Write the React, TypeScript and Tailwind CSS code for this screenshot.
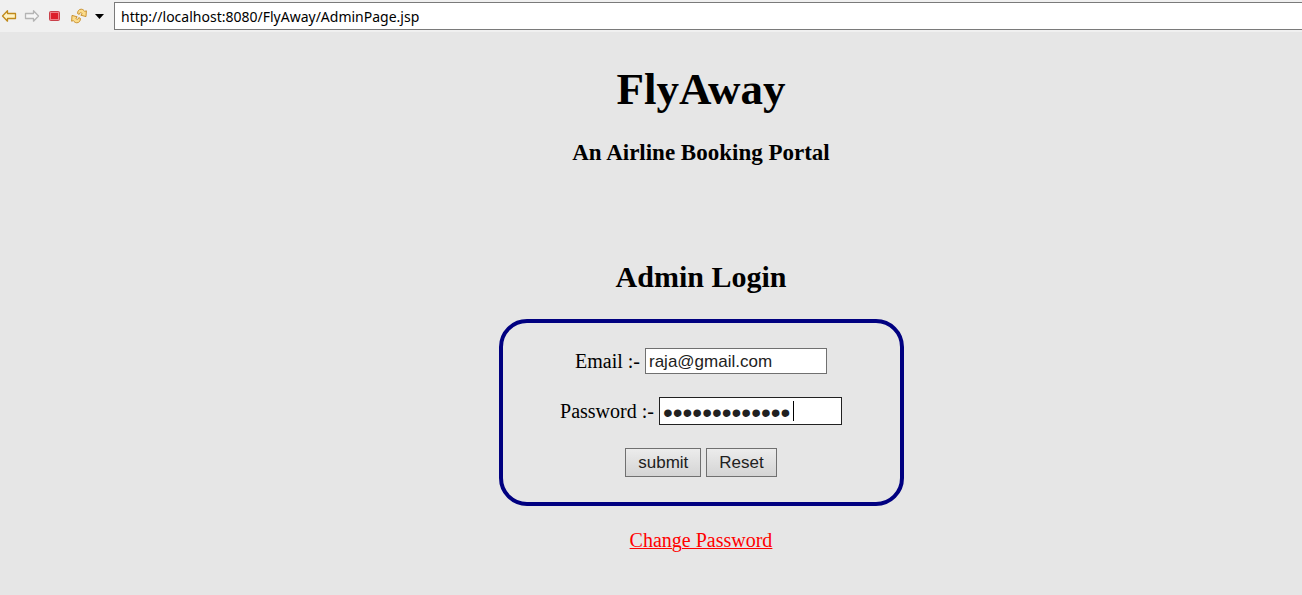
import { useState } from "react";

function ArrowIcon({ forward = false }: { forward?: boolean }) {
  return (
    <svg width="16" height="16" viewBox="0 0 16 16" aria-hidden="true">
      <path
        d={forward ? "M14.5 8 9.5 2.8V5.5H1.5V10.5H9.5V13.2Z" : "M1.5 8 6.5 2.8V5.5H14.5V10.5H6.5V13.2Z"}
        fill={forward ? "#f6f6f6" : "#fff3c4"}
        stroke={forward ? "#b4b4b4" : "#c08a1c"}
        strokeWidth="1.3"
        strokeLinejoin="round"
      />
    </svg>
  );
}

function StopIcon() {
  return (
    <svg width="16" height="16" viewBox="0 0 16 16" aria-hidden="true">
      <rect x="2.5" y="3.5" width="10" height="9" rx="1" fill="#ee8087" stroke="#c9404a" />
      <rect x="4" y="5" width="7" height="6" fill="#dc1e2a" />
    </svg>
  );
}

function RefreshIcon() {
  return (
    <svg width="16" height="16" viewBox="0 0 16 16" aria-hidden="true">
      <g fill="#fbdc8c" stroke="#c68a22" strokeWidth="0.9" strokeLinejoin="round">
        <path d="M6.6 5.6C6.4 3 8 1.2 10.2 1.2 11.6 1.2 12.8 2 13.6 3.4L15.4 2.8 15 8.6 9.8 7.2 11.2 5.6C9.8 4.2 8.4 4.6 8.2 6.4Z" />
        <path d="M9.4 10.4C9.6 13 8 14.8 5.8 14.8 4.4 14.8 3.2 14 2.4 12.6L0.6 13.2 1 7.4 6.2 8.8 4.8 10.4C6.2 11.8 7.6 11.4 7.8 9.6Z" />
      </g>
    </svg>
  );
}

function Toolbar() {
  const [url, setUrl] = useState("http://localhost:8080/FlyAway/AdminPage.jsp");
  return (
    <header className="flex h-8 items-center bg-[#f0f0f0] pl-px">
      <nav aria-label="Browser" className="flex w-[113px] shrink-0 items-center gap-[7px]">
        <button type="button" aria-label="Back"><ArrowIcon /></button>
        <button type="button" aria-label="Forward"><ArrowIcon forward /></button>
        <button type="button" aria-label="Stop"><StopIcon /></button>
        <div className="flex items-center gap-2 pl-px">
          <button type="button" aria-label="Refresh"><RefreshIcon /></button>
          <button type="button" aria-label="Refresh options">
            <svg width="9" height="16" viewBox="0 0 9 16" aria-hidden="true">
              <path d="M0 6H9L4.5 11Z" fill="#000" />
            </svg>
          </button>
        </div>
      </nav>
      <input
        aria-label="Address"
        value={url}
        onChange={(e) => setUrl(e.target.value)}
        className="h-7 min-w-0 flex-1 border border-r-0 border-[#7a7a7a] bg-white px-1.5 font-['Noto_Sans',sans-serif] text-sm text-black outline-none"
      />
    </header>
  );
}

const buttonStyle =
  "h-[29px] border border-[#707070] bg-linear-to-b from-[#ececec] to-[#d4d4d4] px-3 font-['Liberation_Sans',sans-serif] text-[17px] text-[#212121]";

function LoginForm() {
  const [email, setEmail] = useState("raja@gmail.com");
  const [password, setPassword] = useState("administrator");
  return (
    <form
      onSubmit={(e) => e.preventDefault()}
      onReset={() => {
        setEmail("");
        setPassword("");
      }}
      className="mt-6 flex w-[405px] flex-col items-center gap-[23px] rounded-[28px] border-4 border-[#000080] py-[25px]"
    >
      <div className="flex items-center gap-[5px]">
        <label htmlFor="email">Email :-</label>
        <input
          id="email"
          value={email}
          onChange={(e) => setEmail(e.target.value)}
          className="h-[26px] w-[182px] border border-[#707070] bg-white px-[3px] pt-0.5 font-['Liberation_Sans',sans-serif] text-[17px] text-[#212121] outline-none"
        />
      </div>
      <div className="flex items-center gap-[5px]">
        <label htmlFor="password">Password :-</label>
        <div className="relative">
          <input
            id="password"
            type="password"
            value={password}
            onChange={(e) => setPassword(e.target.value)}
            className="block h-7 w-[183px] border border-[#212121] bg-white px-[3px] pt-1 font-['Liberation_Sans',sans-serif] text-[28px] text-[#212121] outline-none"
          />
          <span className="absolute top-1 left-[134px] h-5 w-px bg-black" />
        </div>
      </div>
      <div className="flex gap-[5px]">
        <button type="submit" className={buttonStyle}>submit</button>
        <button type="reset" className={buttonStyle}>Reset</button>
      </div>
    </form>
  );
}

export default function App() {
  return (
    <div className="flex min-h-screen flex-col bg-[#e6e6e6]">
      <Toolbar />
      <main className="flex flex-1 flex-col items-center pt-[31px] pb-8 pl-[100px] font-['Liberation_Serif',serif] text-xl leading-6 text-black">
        <h1 className="text-[45px] leading-[52px] font-bold">FlyAway</h1>
        <h3 className="mt-[25px] text-[23px] leading-[26px] font-bold">An Airline Booking Portal</h3>
        <h2 className="mt-[93px] text-[30px] leading-9 font-bold">Admin Login</h2>
        <LoginForm />
        <a href="#change-password" className="mt-[22px] text-[#ff0000] underline decoration-1">Change Password</a>
      </main>
    </div>
  );
}
